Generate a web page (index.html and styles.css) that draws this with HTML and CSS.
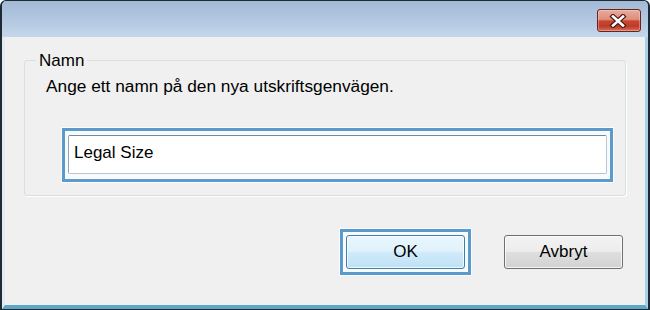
FILE: index.html
```html
<!DOCTYPE html>
<html lang="sv">
<head>
<meta charset="utf-8">
<title>Namn</title>
<link rel="stylesheet" href="styles.css">
</head>
<body>
<div class="window">
  <div class="titlebar">
    <button class="close" type="button" aria-label="Stäng">
      <svg width="18" height="14" viewBox="0 0 18 14">
        <path d="M4 2.5 L14 11.5 M14 2.5 L4 11.5" stroke="#4a1a14" stroke-width="5" stroke-linecap="square" fill="none"/>
        <path d="M4 2.5 L14 11.5 M14 2.5 L4 11.5" stroke="#ffffff" stroke-width="2.6" stroke-linecap="square" fill="none"/>
      </svg>
    </button>
  </div>
  <div class="client">
    <fieldset class="group">
      <legend class="group-label">Namn</legend>
      <p class="desc">Ange ett namn på den nya utskriftsgenvägen.</p>
      <div class="focus-ring field-ring">
        <input class="textbox" type="text" value="Legal Size">
      </div>
    </fieldset>
    <div class="buttons">
      <div class="focus-ring btn-ring">
        <button class="btn btn-default" type="button">OK</button>
      </div>
      <button class="btn" type="button">Avbryt</button>
    </div>
  </div>
</div>
</body>
</html>
```

FILE: styles.css
```css
html, body {
  margin: 0;
  padding: 0;
  background: #ffffff;
}

body {
  font-family: "Liberation Sans", Arial, sans-serif;
  font-size: 17px;
  color: #000;
}

.window {
  width: 650px;
  height: 310px;
  box-sizing: border-box;
  border-style: solid;
  border-color: #1d2933;
  border-width: 1px 2px 1px 2px;
  border-radius: 6px 6px 0 0;
  overflow: hidden;
  display: flex;
  flex-direction: column;
  background: #5ea7c8;
}

.titlebar {
  height: 36px;
  flex: none;
  box-sizing: border-box;
  padding: 8px 7px 0 0;
  display: flex;
  justify-content: flex-end;
  align-items: flex-start;
  background: linear-gradient(#a3bad7 0%, #b3c8e1 55%, #c4d7ec 100%);
}

.close {
  width: 44px;
  height: 23px;
  box-sizing: border-box;
  margin: 0;
  padding: 0 2px 0 0;
  border: 1px solid #6a2219;
  border-radius: 3px;
  background: linear-gradient(#e8ab9e 0%, #de8d7b 45%, #c8472f 52%, #c03a28 78%, #d4725f 100%);
  box-shadow: inset 0 0 0 1px rgba(255, 230, 220, 0.35);
  display: flex;
  align-items: center;
  justify-content: center;
}

.close svg {
  display: block;
}

.client {
  flex: 1;
  display: flex;
  flex-direction: column;
  background: #f0f0f0;
  border-left: 3px solid #e1ebf5;
  border-right: 3px solid #a8d0ea;
  border-bottom: 4px solid #5ea7c8;
}

.group {
  margin: 13px 19px 0 19px;
  padding: 5px 12px 13px 21px;
  border: 1px solid #d5dfe5;
  border-radius: 3px;
  box-shadow: 1px 1px 0 #ffffff;
  min-inline-size: 0;
}

.group-label {
  margin-left: -10px;
  padding: 0 3px;
  line-height: 21px;
}

.desc {
  margin: 0;
  line-height: 20px;
  font-size: 17.3px;
}

.focus-ring {
  border: 3px solid #5b9bcc;
  box-shadow: 0 0 0 1px #fafcfe;
  background: #f8fafc;
}

.field-ring {
  margin: 32px 0 0 16px;
  padding: 4px 3px 5px 3px;
}

.textbox {
  display: block;
  width: 100%;
  height: 39px;
  box-sizing: border-box;
  margin: 0;
  padding: 0 5px 4px 5px;
  border: 1px solid #b7c6d4;
  border-top-color: #6f8aa6;
  border-left-color: #8ea5bc;
  border-radius: 2px;
  background: #ffffff;
  font-family: "Liberation Sans", Arial, sans-serif;
  font-size: 17px;
  color: #000;
  outline: none;
}

.buttons {
  margin-top: 33px;
  padding-right: 22px;
  display: flex;
  justify-content: flex-end;
  align-items: center;
  gap: 33px;
}

.btn-ring {
  padding: 3px;
}

.btn {
  display: block;
  width: 119px;
  height: 34px;
  box-sizing: border-box;
  margin: 0;
  padding: 0 0 1px 0;
  border: 1px solid #707070;
  border-radius: 3px;
  background: linear-gradient(#f3f3f3 0%, #ececec 48%, #dedede 52%, #d2d2d2 100%);
  box-shadow: inset 0 0 0 1px rgba(255, 255, 255, 0.75);
  font-family: "Liberation Sans", Arial, sans-serif;
  font-size: 17px;
  color: #000;
}

.btn-default {
  border-color: #3c7fb1;
  background: linear-gradient(#eaf6fd 0%, #dff2fc 48%, #cfeafa 52%, #bfe1f5 100%);
}
```
